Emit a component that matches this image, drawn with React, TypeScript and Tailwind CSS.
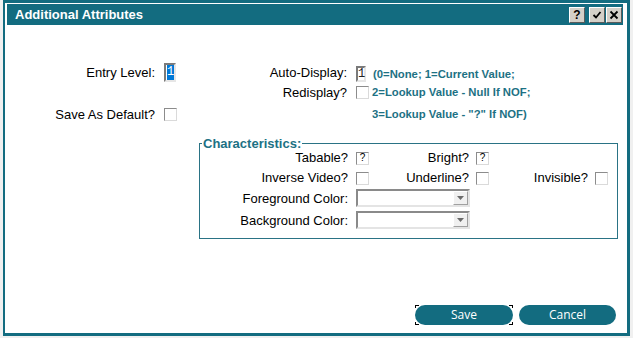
import React from "react";

const Check = () => (
  <span className="block w-[13px] h-[13px] border border-t-[#8c8c8c] border-l-[#8c8c8c] border-r-[#dadada] border-b-[#dadada] bg-white" />
);

const Maybe = () => (
  <span className="flex items-center justify-center w-[13px] h-[13px] border border-t-[#8c8c8c] border-l-[#8c8c8c] border-r-[#dadada] border-b-[#dadada] bg-white text-[10px] leading-none text-black">
    ?
  </span>
);

const ColorSelect = () => (
  <div className="flex w-[114px] h-[18px] border-2 border-t-[#8a8a8a] border-l-[#8a8a8a] border-r-[#e4e4e4] border-b-[#e4e4e4] bg-white">
    <div className="flex-1" />
    <div className="flex items-center justify-center w-[15px] h-full bg-[#f0f0f0] border border-t-white border-l-white border-r-[#a0a0a0] border-b-[#a0a0a0]">
      <svg width="7" height="4" viewBox="0 0 7 4">
        <path d="M0 0 L7 0 L3.5 4 Z" fill="#6b6b6b" />
      </svg>
    </div>
  </div>
);

const TitleButton = ({ children }: { children: React.ReactNode }) => (
  <div className="flex items-center justify-center w-[16px] h-[16px] bg-[#d4d0c8] border border-t-white border-l-white border-r-[#5a5a5a] border-b-[#5a5a5a]">
    {children}
  </div>
);

export default function App() {
  return (
    <div className="w-[633px] h-[338px] bg-[#f0f0f0] font-['Liberation_Sans',Arial,sans-serif] text-[13px] text-black">
      <div className="ml-[3px] w-[627px] h-[336px] flex flex-col bg-white border-[#136c80] border-l-2 border-t-[3px] border-r-[3px] border-b-[3px] pl-[2px] pt-[1px] pr-[4px]">
        {/* title bar */}
        <div className="flex items-center h-[21px] bg-[#136c80] pl-[8px] pr-[1px]">
          <span className="text-white font-bold text-[13px]">Additional Attributes</span>
          <div className="ml-auto flex items-center mt-[1px]">
            <TitleButton>
              <span className="font-bold text-[12px] leading-none">?</span>
            </TitleButton>
            <div className="ml-[4px]">
              <TitleButton>
                <svg width="10" height="10" viewBox="0 0 10 10">
                  <path d="M1.5 5 L4 7.5 L8.5 2" stroke="#000" strokeWidth="1.8" fill="none" />
                </svg>
              </TitleButton>
            </div>
            <div className="ml-[1px]">
              <TitleButton>
                <svg width="10" height="10" viewBox="0 0 10 10">
                  <path d="M1.5 1.5 L8.5 8.5 M8.5 1.5 L1.5 8.5" stroke="#000" strokeWidth="1.8" fill="none" />
                </svg>
              </TitleButton>
            </div>
          </div>
        </div>

        {/* body */}
        <div className="flex-1 flex flex-col pt-[38px]">
          <div className="flex items-start h-[19px]">
            <span className="w-[148px] text-right leading-[19px]">Entry Level:</span>
            <div className="ml-[9px] w-[12px] h-[19px] border-2 border-t-[#7a7a7a] border-l-[#7a7a7a] border-r-[#e6e6e6] border-b-[#e6e6e6] bg-white">
              <span className="block w-[7px] h-[15px] ml-[1px] bg-[#0078d7] text-white font-['Liberation_Mono',monospace] text-[12px] leading-[15px]">1</span>
            </div>
            <span className="w-[171px] text-right leading-[19px]">Auto-Display:</span>
            <div className="ml-[9px] mt-[3px] w-[10px] h-[16px] border-2 border-t-[#7a7a7a] border-l-[#7a7a7a] border-r-[#e6e6e6] border-b-[#e6e6e6] bg-white font-['Liberation_Mono',monospace] text-[12px] leading-[12px] text-[#222]">
              1
            </div>
            <span className="ml-[7px] mt-[2px] leading-[19px] text-[11.3px] font-bold text-[#1d7184]">
              (0=None; 1=Current Value;
            </span>
          </div>

          <div className="flex items-center h-[13px] mt-[4px]">
            <div className="w-[169px]" />
            <span className="w-[171px] text-right">Redisplay?</span>
            <div className="ml-[9px]">
              <Check />
            </div>
            <span className="ml-[3px] text-[11.3px] font-bold text-[#1d7184]">2=Lookup Value - Null If NOF;</span>
          </div>

          <div className="flex items-center h-[13px] mt-[9px]">
            <span className="w-[148px] text-right">Save As Default?</span>
            <div className="ml-[9px]">
              <Check />
            </div>
            <span className="ml-[195px] text-[11.3px] font-bold text-[#1d7184]">3=Lookup Value - "?" If NOF)</span>
          </div>

          <fieldset className="mt-[15px] ml-[192px] w-[419px] h-[103px] border border-[#2a7385]">
            <legend className="ml-[2px] px-[1px] text-[13px] leading-[15px] font-bold text-[#1d7184]">Characteristics:</legend>
            <div className="flex items-center h-[14px]">
              <span className="w-[148px] text-right">Tabable?</span>
              <div className="ml-[8px]">
                <Maybe />
              </div>
              <span className="w-[100px] text-right">Bright?</span>
              <div className="ml-[7px]">
                <Maybe />
              </div>
            </div>
            <div className="flex items-center h-[14px] mt-[6px]">
              <span className="w-[148px] text-right">Inverse Video?</span>
              <div className="ml-[8px]">
                <Check />
              </div>
              <span className="w-[100px] text-right">Underline?</span>
              <div className="ml-[7px]">
                <Check />
              </div>
              <span className="w-[99px] text-right">Invisible?</span>
              <div className="ml-[7px]">
                <Check />
              </div>
            </div>
            <div className="flex items-center h-[18px] mt-[4px]">
              <span className="w-[148px] text-right pt-[2px]">Foreground Color:</span>
              <div className="ml-[8px]">
                <ColorSelect />
              </div>
            </div>
            <div className="flex items-center h-[18px] mt-[4px]">
              <span className="w-[148px] text-right pt-[2px]">Background Color:</span>
              <div className="ml-[8px]">
                <ColorSelect />
              </div>
            </div>
          </fieldset>

          <div className="mt-auto flex justify-end gap-[6px] pr-[7px] pb-[8px] font-['Open_Sans','Noto_Sans',sans-serif] text-[12px]">
            <div className="relative w-[98px] h-[20px]">
              <button className="w-full h-full rounded-full bg-[#136c80] text-white">Save</button>
              <span className="absolute left-0 top-0 w-[4px] h-[3px] border-l border-t border-black" />
              <span className="absolute right-0 top-0 w-[4px] h-[3px] border-r border-t border-black" />
              <span className="absolute left-0 bottom-0 w-[4px] h-[3px] border-l border-b border-black" />
              <span className="absolute right-0 bottom-0 w-[4px] h-[3px] border-r border-b border-black" />
            </div>
            <button className="w-[97px] h-[20px] rounded-full bg-[#136c80] text-white">Cancel</button>
          </div>
        </div>
      </div>
    </div>
  );
}
